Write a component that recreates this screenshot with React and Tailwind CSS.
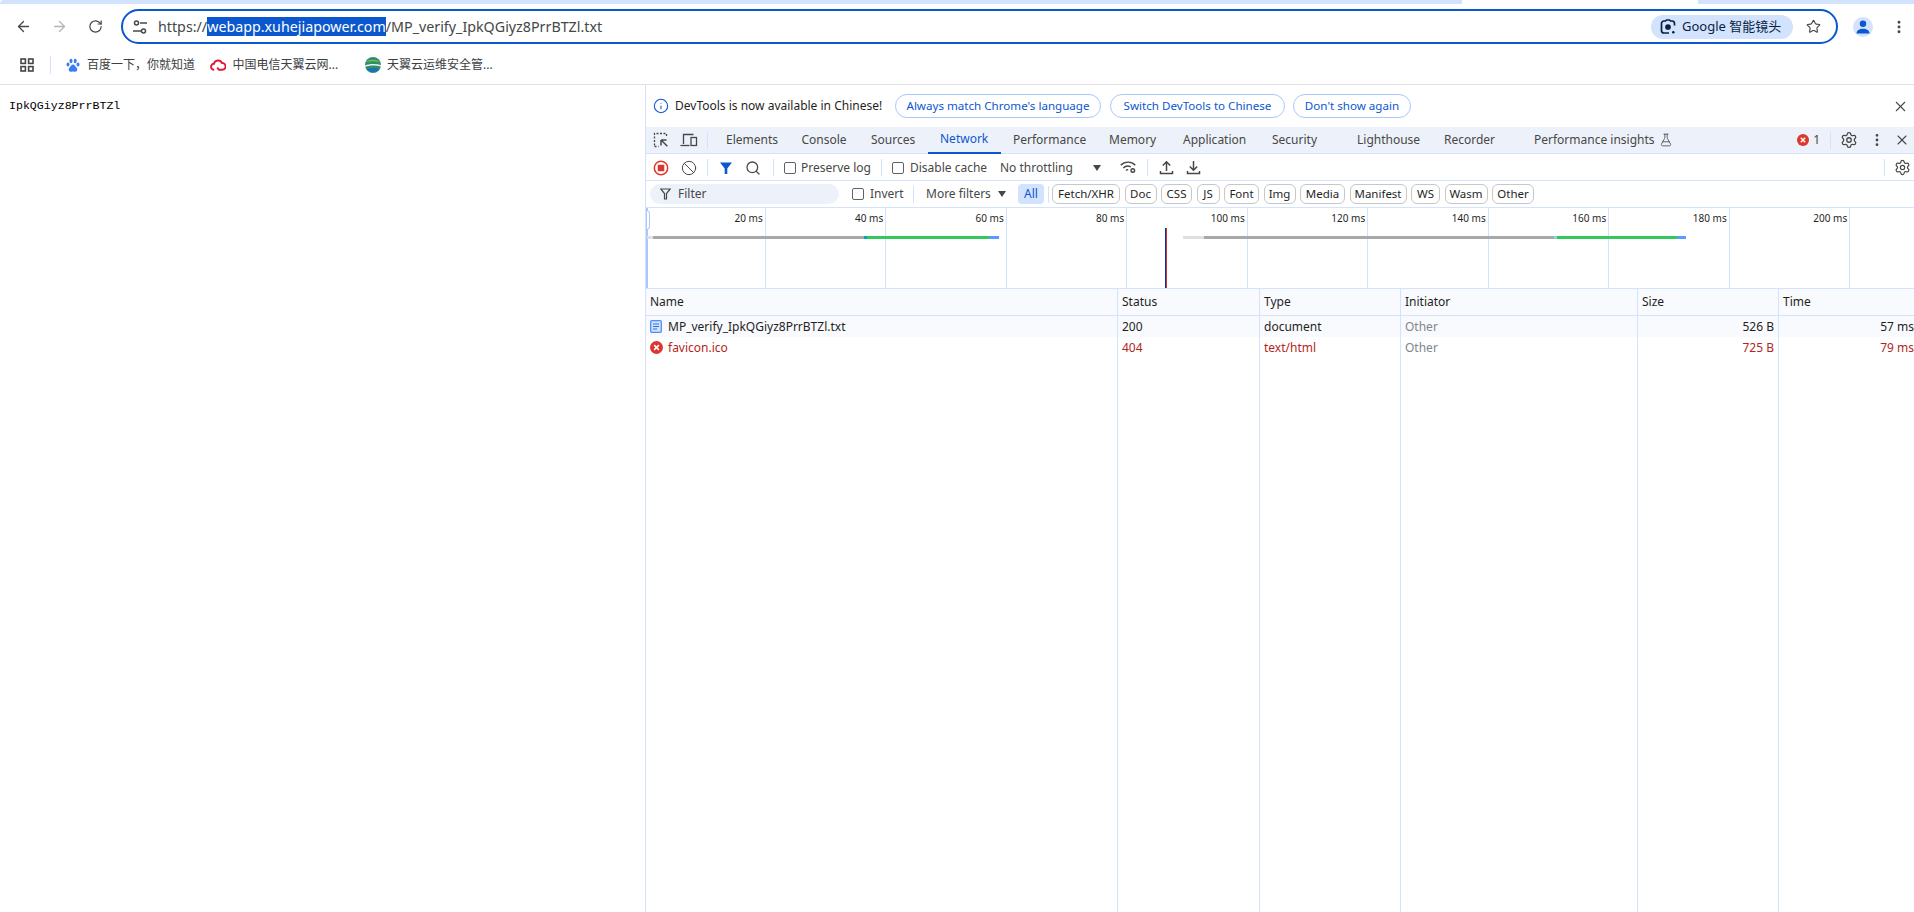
import React from "react";
import { ArrowLeft, ArrowRight, RotateCw, Star, EllipsisVertical, X, Search, Settings, FlaskConical, Ban, Info } from "lucide-react";

const Sep = ({ className = "" }) => <div className={"w-px h-[17px] bg-[#d3e3fd] shrink-0 " + className} />;
const Check = ({ className = "" }) => <div className={"w-[12px] h-[12px] rounded-[2px] border border-[#5f6368] bg-white shrink-0 " + className} />;

function Tune() {
  return (
    <svg width="16" height="16" viewBox="0 0 16 16" fill="none" stroke="#474747" strokeWidth="1.5">
      <circle cx="4.5" cy="4" r="2" />
      <path d="M8 4h7" />
      <circle cx="11.5" cy="12" r="2" />
      <path d="M1 12h8" />
    </svg>
  );
}
function Apps() {
  return (
    <svg width="14" height="14" viewBox="0 0 14 14" fill="none" stroke="#444746" strokeWidth="1.6">
      <rect x="1" y="1" width="4.4" height="4.4" />
      <rect x="8.6" y="1" width="4.4" height="4.4" />
      <rect x="1" y="8.6" width="4.4" height="4.4" />
      <rect x="8.6" y="8.6" width="4.4" height="4.4" />
    </svg>
  );
}
function Paw() {
  return (
    <svg width="14" height="15" viewBox="0 0 14 15" fill="#3b7cf0">
      <ellipse cx="2" cy="6.5" rx="1.5" ry="2" />
      <ellipse cx="5" cy="3" rx="1.5" ry="2.2" />
      <ellipse cx="9.2" cy="3" rx="1.5" ry="2.2" />
      <ellipse cx="12" cy="6.5" rx="1.5" ry="2" />
      <path d="M7 6.5c-1.8 0-2.2 2-3.4 3-1.3 1-1.4 4.2 1.3 4.2 1 0 1.3-.3 2.1-.3s1.1.3 2.1.3c2.7 0 2.6-3.2 1.3-4.2-1.2-1-1.6-3-3.4-3z" />
    </svg>
  );
}
function CloudIcon() {
  return (
    <svg width="16" height="12" viewBox="0 0 16 12" fill="none" stroke="#e0173c" strokeWidth="1.9">
      <path d="M4.2 10.8a3 3 0 0 1-.3-6A4.3 4.3 0 0 1 12 4a3.4 3.4 0 0 1 .4 6.8H9L7.2 8.6" />
    </svg>
  );
}
function Globe() {
  return (
    <svg width="16" height="16" viewBox="0 0 16 16">
      <circle cx="8" cy="8" r="8" fill="#2f8f6b" />
      <path d="M1 5c3-3 10-3 14 0-4-1-10-1-14 0z" fill="#7cc243" />
      <path d="M0 8.5c4-2 11-2 16-.5v1.5c-5-1.500-12-1.500-16 .5z" fill="#e8f1f5" />
      <path d="M1.500 12c4-1.500 9-1.500 13 0-3 4-10 4-13 0z" fill="#1c6fb8" />
    </svg>
  );
}
function Lens() {
  return (
    <svg width="16" height="16" viewBox="0 0 16 16" fill="none" stroke="#0a1f44" strokeWidth="1.7">
      <path d="M14.500 6.500V4.500A2.500 2.500 0 0 0 12 2h-1.500L9.500 1h-3l-1 1H4A2.500 2.500 0 0 0 1.500 4.500v7A2.500 2.500 0 0 0 4 14h5" />
      <circle cx="8" cy="8" r="2" fill="#0a1f44" />
      <circle cx="13.300" cy="13.300" r="1.300" fill="#0a1f44" stroke="none" />
    </svg>
  );
}
function Profile() {
  return (
    <div className="w-5 h-5 rounded-full bg-[#d3e3fd] flex items-center justify-center">
      <svg width="14" height="14" viewBox="0 0 14 14" fill="#0b57d0">
        <circle cx="7" cy="3.800" r="3.200" />
        <path d="M0.500 13.500c0-3.300 3-4.800 6.500-4.800s6.500 1.500 6.500 4.800z" />
      </svg>
    </div>
  );
}
function Inspect() {
  return (
    <svg width="16" height="16" viewBox="0 0 16 16" fill="none" stroke="#474747" strokeWidth="1.300">
      <path d="M1.500 13.500v-12h12v4" strokeDasharray="2 1.500" />
      <path d="M1.500 14.500h4" strokeDasharray="2 1.500" />
      <path d="M8 8v5.500M8 8h5.500M8.300 8.300l6 6" strokeWidth="1.500" />
    </svg>
  );
}
function Device() {
  return (
    <svg width="18" height="16" viewBox="0 0 18 16" fill="none" stroke="#474747" strokeWidth="1.300">
      <path d="M3.500 12V2.500h10" />
      <path d="M0.500 13.500h9" />
      <rect x="11" y="5.500" width="5.500" height="8" />
    </svg>
  );
}
function Record() {
  return (
    <svg width="16" height="16" viewBox="0 0 16 16">
      <circle cx="8" cy="8" r="6.700" fill="none" stroke="#dc362e" strokeWidth="1.500" />
      <rect x="4.700" y="4.700" width="6.600" height="6.600" rx="0.800" fill="#dc362e" />
    </svg>
  );
}
function Funnel({ color = "#0b57d0", size = 14 }) {
  return (
    <svg width={size} height={size} viewBox="0 0 14 14" fill={color}>
      <path d="M1 1.500h12L8.300 7.500V13H5.700V7.500z" />
    </svg>
  );
}
function FunnelOutline() {
  return (
    <svg width="11" height="12" viewBox="0 0 11 12" fill="none" stroke="#474747" strokeWidth="1.200">
      <path d="M0.800 1h9.400L6.500 5.500V11H4.500V5.500z" />
    </svg>
  );
}
function Caret() {
  return (
    <svg width="8" height="6" viewBox="0 0 8 6" fill="#474747">
      <path d="M0 0h8L4 6z" />
    </svg>
  );
}
function Wifi() {
  return (
    <svg width="17" height="15" viewBox="0 0 17 15" fill="none" stroke="#474747" strokeWidth="1.400">
      <path d="M0.800 5.200a10 10 0 0 1 14.500 0" />
      <path d="M3.300 8a6.500 6.500 0 0 1 7.500-1.200" />
      <path d="M6 10.500a2.500 2.500 0 0 1 2.200-.8" />
      <circle cx="12.800" cy="10.500" r="1.800" />
    </svg>
  );
}
function UploadIcon() {
  return (
    <svg width="15" height="15" viewBox="0 0 15 15" fill="none" stroke="#474747" strokeWidth="1.500">
      <path d="M7.500 11V2M3.800 5.500l3.700-3.700 3.700 3.700" />
      <path d="M1.500 11v2.500h12V11" />
    </svg>
  );
}
function DownloadIcon() {
  return (
    <svg width="15" height="15" viewBox="0 0 15 15" fill="none" stroke="#474747" strokeWidth="1.500">
      <path d="M7.500 1v9M3.800 6.500l3.700 3.700 3.700-3.700" />
      <path d="M1.500 11v2.500h12V11" />
    </svg>
  );
}
function ErrorIcon({ size = 12 }) {
  return (
    <svg width={size} height={size} viewBox="0 0 12 12">
      <circle cx="6" cy="6" r="6" fill="#dc362e" />
      <path d="M3.800 3.800l4.400 4.400M8.200 3.800l-4.400 4.400" stroke="#fff" strokeWidth="1.400" />
    </svg>
  );
}
function DocIcon() {
  return (
    <svg width="12" height="13" viewBox="0 0 12 13" fill="none">
      <rect x="0.700" y="0.700" width="10.600" height="11.600" rx="1.300" fill="#d3e3fd" stroke="#4c8df6" strokeWidth="1.300" />
      <path d="M3 4h6M3 6.500h6M3 9h4" stroke="#2f6fd8" strokeWidth="1.100" />
    </svg>
  );
}

const tabs = [
  ["Elements", "w-[75.500px]"],
  ["Console", "w-[69.500px]"],
  ["Sources", "w-[69px]"],
  ["Network", "w-[73px]"],
  ["Performance", "w-[96px]"],
  ["Memory", "w-[74px]"],
  ["Application", "w-[89px]"],
  ["Security", "w-[85px]"],
  ["Lighthouse", "w-[87px]"],
  ["Recorder", "w-[90px]"],
];

const chips = [
  ["Fetch/XHR", "w-[68px]"],
  ["Doc", "w-[32px]"],
  ["CSS", "w-[31px]"],
  ["JS", "w-[23px]"],
  ["Font", "w-[35px]"],
  ["Img", "w-[32px]"],
  ["Media", "w-[45px]"],
  ["Manifest", "w-[57px]"],
  ["WS", "w-[29px]"],
  ["Wasm", "w-[43px]"],
  ["Other", "w-[42px]"],
];

const ticks = ["20 ms", "40 ms", "60 ms", "80 ms", "100 ms", "120 ms", "140 ms", "160 ms", "180 ms", "200 ms"];

const columns = [
  { w: "w-[472px]", head: "Name" },
  { w: "w-[142px]", head: "Status", a: "200", b: "404" },
  { w: "w-[141px]", head: "Type", a: "document", b: "text/html" },
  { w: "w-[237px]", head: "Initiator", a: "Other", b: "Other", gray: true },
  { w: "w-[141px]", head: "Size", a: "526 B", b: "725 B", right: true },
  { w: "w-[139px]", head: "Time", a: "57 ms", b: "79 ms", right: true, last: true },
];

function Seg({ className }) {
  return <div className={"absolute top-[28px] h-[3px] " + className} />;
}

export default function App() {
  return (
    <div className="h-screen w-full overflow-hidden bg-white flex flex-col font-['Noto_Sans','Noto_Sans_CJK_SC',sans-serif] text-[#1f1f1f]">
      {/* window strip */}
      <div className="flex h-[4px] shrink-0">
        <div className="w-[1462px] bg-[#d3e3fd] rounded-tl-lg" />
        <div className="w-[236px] bg-white" />
        <div className="flex-1 bg-[#d3e3fd]" />
      </div>

      {/* toolbar */}
      <div className="h-[42px] pt-[3px] shrink-0 flex items-center">
        <div className="w-[46px] flex justify-center"><ArrowLeft size={17} color="#474747" strokeWidth={1.800} /></div>
        <div className="w-[26px] flex justify-center"><ArrowRight size={17} color="#b4b4b4" strokeWidth={1.800} /></div>
        <div className="w-[46px] flex justify-center"><RotateCw size={15} color="#474747" strokeWidth={1.900} /></div>
        <div className="ml-[3px] w-[1717px] h-[35px] rounded-full border-2 border-[#0b57d0] flex items-center shrink-0">
          <div className="ml-[9px] w-[16px] flex"><Tune /></div>
          <div className="ml-[10px] text-[14.270px] whitespace-nowrap text-[#444746] leading-[24px]">
            https://<span className="bg-[#0b57d0] text-white">webapp.xuhejiapower.com</span>/MP_verify_IpkQGiyz8PrrBTZl.txt
          </div>
          <div className="ml-auto h-[24px] w-[142px] rounded-full bg-[#d3e3fd] flex items-center pl-[9px] text-[13px] text-[#0a1f44] whitespace-nowrap">
            <Lens /><span className="ml-[6px]">Google 智能镜头</span>
          </div>
          <div className="ml-[13px] mr-[15px]"><Star size={15} color="#474747" strokeWidth={1.800} /></div>
        </div>
        <div className="ml-[15px]"><Profile /></div>
        <div className="ml-[18px]"><EllipsisVertical size={16} color="#474747" strokeWidth={2.400} /></div>
      </div>

      {/* bookmarks */}
      <div className="h-[39px] shrink-0 flex items-center border-b border-[#e0e0e0] text-[12px] text-[#3c4043] whitespace-nowrap">
        <div className="ml-[20px]"><Apps /></div>
        <div className="ml-[16px] w-px h-[18px] bg-[#d3e3fd]" />
        <div className="ml-[15px]"><Paw /></div>
        <span className="ml-[7px] w-[112px]">百度一下，你就知道</span>
        <div className="ml-[11px] w-[16px]"><CloudIcon /></div>
        <span className="ml-[6.500px] w-[132.500px]">中国电信天翼云网...</span>
        <Globe />
        <span className="ml-[6px]">天翼云运维安全管...</span>
      </div>

      {/* content */}
      <div className="flex-1 flex min-h-0">
        <div className="w-[645px] shrink-0 pl-[9px] pt-[13px] font-['Liberation_Mono',monospace] text-[11.600px] leading-[16px] text-black whitespace-nowrap">
          IpkQGiyz8PrrBTZl
        </div>

        <div className="flex-1 min-w-0 overflow-hidden border-l border-[#d3e3fd] flex flex-col text-[12px] text-[#474747] whitespace-nowrap">
          {/* infobar */}
          <div className="h-[42px] shrink-0 flex items-center">
            <div className="ml-[7px] w-[16px]"><Info size={16} color="#0b57d0" strokeWidth={1.600} /></div>
            <span className="ml-[6px] w-[218px] text-[#1f1f1f]">DevTools is now available in Chinese!</span>
            <div className="ml-[2px] w-[206px] h-[24px] rounded-full border border-[#a8c7fa] text-[#0b57d0] text-[11.600px] flex items-center justify-center">Always match Chrome's language</div>
            <div className="ml-[9px] w-[175px] h-[24px] rounded-full border border-[#a8c7fa] text-[#0b57d0] text-[11.600px] flex items-center justify-center">Switch DevTools to Chinese</div>
            <div className="ml-[8px] w-[118px] h-[24px] rounded-full border border-[#a8c7fa] text-[#0b57d0] text-[11.600px] flex items-center justify-center">Don't show again</div>
            <div className="ml-auto mr-[5px]"><X size={17} color="#474747" strokeWidth={1.500} /></div>
          </div>

          {/* tabs */}
          <div className="h-[27px] shrink-0 bg-[#edf2fa] border-b border-[#d3e3fd] flex items-center">
            <div className="ml-px w-[28px] flex justify-center"><Inspect /></div>
            <div className="w-[28px] flex justify-center"><Device /></div>
            <Sep className="ml-[4px]" />
            <div className="ml-[6px] flex h-full">
              {tabs.map(([t, w]) => (
                <div key={t} className={w + " pl-[12px] pb-[1px] h-[27px] flex items-center " + (t === "Network" ? "text-[#0b57d0] border-b-2 border-[#0b57d0]" : "")}>{t}</div>
              ))}
              <div className="pl-[12px] pb-[1px] flex items-center">
                Performance insights
                <FlaskConical size={14} color="#474747" strokeWidth={1.400} className="ml-[4px]" />
              </div>
            </div>
            <div className="ml-auto flex items-center">
              <ErrorIcon />
              <span className="ml-[4px]">1</span>
              <Sep className="ml-[10px]" />
              <div className="ml-[9px]"><Settings size={18} color="#474747" strokeWidth={1.700} /></div>
              <div className="ml-[11px] w-[16px]"><EllipsisVertical size={16} color="#474747" strokeWidth={2.200} /></div>
              <div className="ml-[9px] mr-[4px]"><X size={16} color="#474747" strokeWidth={1.600} /></div>
            </div>
          </div>

          {/* network toolbar */}
          <div className="h-[27px] pt-[1px] shrink-0 border-b border-[#d3e3fd] flex items-center">
            <div className="ml-px w-[28px] flex justify-center"><Record /></div>
            <div className="w-[28px] flex justify-center"><Ban size={16} color="#474747" strokeWidth={1.500} /></div>
            <Sep className="ml-[4px]" />
            <div className="ml-[11px]"><Funnel /></div>
            <div className="ml-[12px]"><Search size={16} color="#474747" strokeWidth={1.900} /></div>
            <Sep className="ml-[12px]" />
            <Check className="ml-[10px]" />
            <span className="ml-[5px] w-[72px]">Preserve log</span>
            <Sep className="ml-[8px]" />
            <Check className="ml-[10px]" />
            <span className="ml-[6px] w-[80px]">Disable cache</span>
            <span className="ml-[10px] w-[74px]">No throttling</span>
            <div className="ml-[19px]"><Caret /></div>
            <div className="ml-[19px]"><Wifi /></div>
            <Sep className="ml-[10px]" />
            <div className="ml-[11px]"><UploadIcon /></div>
            <div className="ml-[12px]"><DownloadIcon /></div>
            <div className="ml-auto flex items-center">
              <Sep />
              <div className="ml-[9px] mr-[3px]"><Settings size={17} color="#474747" strokeWidth={1.700} /></div>
            </div>
          </div>

          {/* filter row */}
          <div className="h-[27px] shrink-0 border-b border-[#d3e3fd] flex items-center">
            <div className="ml-[4px] w-[189px] h-[20px] rounded-full bg-[#edf2fa] flex items-center pl-[10px]">
              <FunnelOutline />
              <span className="ml-[7px]">Filter</span>
            </div>
            <Check className="ml-[13px]" />
            <span className="ml-[6px] w-[33px]">Invert</span>
            <Sep className="ml-[10px]" />
            <span className="ml-[12px] w-[66px]">More filters</span>
            <div className="ml-[6px]"><Caret /></div>
            <div className="ml-[12px] w-[26px] h-[20px] rounded bg-[#d3e3fd] text-[#0b57d0] flex items-center justify-center">All</div>
            <Sep className="ml-[4px]" />
            <div className="ml-[3px] flex gap-[4.500px]">
              {chips.map(([c, w]) => (
                <div key={c} className={w + " h-[20px] rounded-md border border-[#c7c7c7] text-[#1f1f1f] flex items-center justify-center text-[11.500px]"}>{c}</div>
              ))}
            </div>
          </div>

          {/* overview */}
          <div className="h-[81px] shrink-0 border-b border-[#d3e3fd] flex relative overflow-hidden">
            {ticks.map((t, i) => (
              <div key={t} className={(i === 0 ? "w-[119.700px]" : "w-[120.500px]") + " shrink-0 border-r border-[#d3e3fd] pt-[3px] pr-[2px] text-right text-[10px] leading-[14px] text-[#1f1f1f]"}>{t}</div>
            ))}
            <div className="absolute left-0 top-0 bottom-0 w-[2px] bg-[#a8c7fa]" />
            <div className="absolute left-0 top-[2px] w-[4px] h-[20px] rounded-r bg-white border border-[#a8c7fa]" />
            <Seg className="left-[1px] w-[6px] bg-[#e0e0e0]" />
            <Seg className="left-[7px] w-[211px] bg-[#a8a8a8]" />
            <Seg className="left-[218px] w-[3px] bg-[#00a3c4]" />
            <Seg className="left-[221px] w-[122px] bg-[#34c759]" />
            <Seg className="left-[343px] w-[10px] bg-[#5b9bff]" />
            <Seg className="left-[537px] w-[21px] bg-[#e0e0e0]" />
            <Seg className="left-[558px] w-[350px] bg-[#a8a8a8]" />
            <Seg className="left-[908px] w-[3px] bg-[#8ed0e0]" />
            <Seg className="left-[911px] w-[120px] bg-[#34c759]" />
            <Seg className="left-[1031px] w-[9px] bg-[#5b9bff]" />
            <div className="absolute left-[519px] top-[20px] bottom-0 w-px bg-[#0b2fa0]" />
            <div className="absolute left-[520px] top-[20px] bottom-0 w-px bg-[#c8372d]" />
          </div>

          {/* table */}
          <div className="flex-1 flex min-h-0">
            {columns.map((c, i) => (
              <div key={c.head} className={c.w + " shrink-0 flex flex-col " + (c.last ? "" : "border-r border-[#d3e3fd]")}>
                <div className="h-[27px] shrink-0 bg-[#f8fafd] border-b border-[#d3e3fd] flex items-center px-[4px] text-[#1f1f1f]">{c.head}</div>
                <div className={"h-[21px] shrink-0 bg-[#f8fafd] flex items-center px-[4px] " + (c.right ? "justify-end " : "") + (c.gray ? "text-[#80868b]" : "text-[#1f1f1f]")}>
                  {i === 0 ? (<><DocIcon /><span className="ml-[6px]">MP_verify_IpkQGiyz8PrrBTZl.txt</span></>) : c.a}
                </div>
                <div className={"h-[21px] shrink-0 flex items-center px-[4px] " + (c.right ? "justify-end " : "") + (c.gray ? "text-[#80868b]" : "text-[#b3261e]")}>
                  {i === 0 ? (<><ErrorIcon size={13} /><span className="ml-[5px]">favicon.ico</span></>) : c.b}
                </div>
              </div>
            ))}
          </div>
        </div>
      </div>
    </div>
  );
}
